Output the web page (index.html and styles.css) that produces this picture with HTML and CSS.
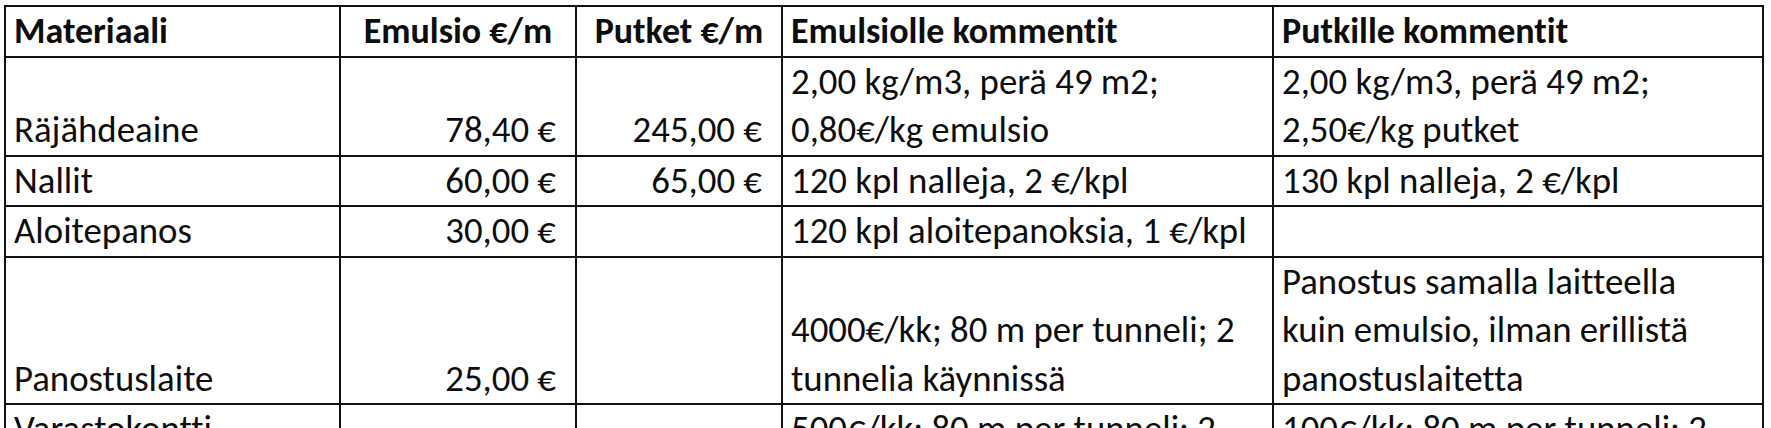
FILE: index.html
```html
<!DOCTYPE html>
<html lang="fi">
<head>
<meta charset="utf-8">
<title>Materiaalikustannukset</title>
<link rel="stylesheet" href="styles.css">
</head>
<body>
<div class="sheet">
<table class="grid">
  <colgroup>
    <col class="c-mat">
    <col class="c-emu">
    <col class="c-put">
    <col class="c-kom1">
    <col class="c-kom2">
  </colgroup>
  <thead>
    <tr class="r-head">
      <th class="txt">Materiaali</th>
      <th class="ctr">Emulsio €/m</th>
      <th class="ctr">Putket €/m</th>
      <th class="txt">Emulsiolle kommentit</th>
      <th class="txt">Putkille kommentit</th>
    </tr>
  </thead>
  <tbody>
    <tr>
      <td class="txt">Räjähdeaine</td>
      <td class="num">78,40 €</td>
      <td class="num">245,00 €</td>
      <td class="txt">2,00 kg/m3, perä 49 m2;<br>0,80€/kg emulsio</td>
      <td class="txt">2,00 kg/m3, perä 49 m2;<br>2,50€/kg putket</td>
    </tr>
    <tr>
      <td class="txt">Nallit</td>
      <td class="num">60,00 €</td>
      <td class="num">65,00 €</td>
      <td class="txt">120 kpl nalleja, 2 €/kpl</td>
      <td class="txt">130 kpl nalleja, 2 €/kpl</td>
    </tr>
    <tr>
      <td class="txt">Aloitepanos</td>
      <td class="num">30,00 €</td>
      <td class="num"></td>
      <td class="txt">120 kpl aloitepanoksia, 1 €/kpl</td>
      <td class="txt"></td>
    </tr>
    <tr>
      <td class="txt">Panostuslaite</td>
      <td class="num">25,00 €</td>
      <td class="num"></td>
      <td class="txt">4000€/kk; 80 m per tunneli; 2<br>tunnelia käynnissä</td>
      <td class="txt">Panostus samalla laitteella<br>kuin emulsio, ilman erillistä<br>panostuslaitetta</td>
    </tr>
    <tr class="r-top">
      <td class="txt">Varastokontti</td>
      <td class="num"></td>
      <td class="num"></td>
      <td class="txt">500€/kk; 80 m per tunneli; 2<br>tunnelia käynnissä</td>
      <td class="txt">100€/kk; 80 m per tunneli; 2<br>tunnelia käynnissä</td>
    </tr>
  </tbody>
</table>
</div>
</body>
</html>
```

FILE: styles.css
```css
html, body {
  margin: 0;
  padding: 0;
  background: #ffffff;
}

.sheet {
  padding: 5px 0 0 4px;
}

.grid {
  border-collapse: collapse;
  table-layout: fixed;
  width: 1758px;
  font-family: "Carlito", "Lato", "Liberation Sans", sans-serif;
  font-size: 36.8px;
  line-height: 48.5px;
  color: #0d0d0d;
  font-variant-ligatures: none;
  font-feature-settings: "liga" 0, "clig" 0;
}

.c-mat { width: 335px; }
.c-emu { width: 236px; }
.c-put { width: 206px; }
.c-kom1 { width: 491px; }
.c-kom2 { width: 490px; }

.grid th,
.grid td {
  border: 2px solid #111111;
  padding: 0;
  vertical-align: bottom;
  white-space: nowrap;
  overflow: hidden;
}

.grid th {
  font-weight: 700;
  font-size: 36px;
}

.txt {
  text-align: left;
  padding-left: 8px !important;
}

.ctr {
  text-align: center;
}

.num {
  text-align: right;
  padding-right: 19px !important;
}

.r-top td {
  vertical-align: top;
}
```
